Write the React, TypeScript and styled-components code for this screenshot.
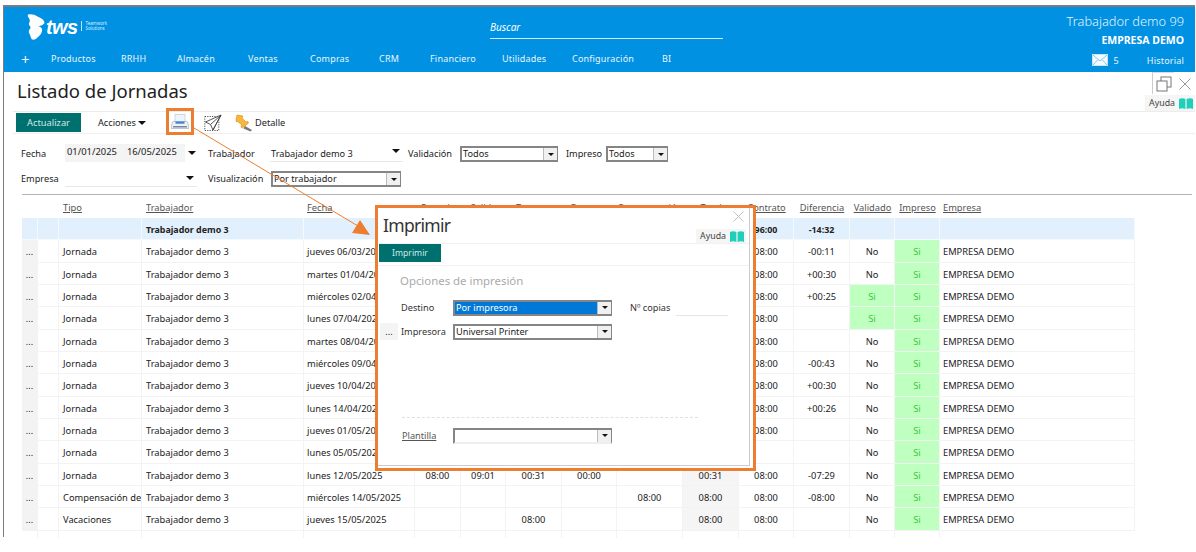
import React from "react";
import styled, { createGlobalStyle } from "styled-components";

const Global = createGlobalStyle`
  html, body { margin: 0; padding: 0; background: #fff; overflow: hidden; }
  body { font-family: "Noto Sans", "Open Sans", sans-serif; color: #222; }
`;

const Page = styled.div`
  position: relative;
  width: 1196px;
  height: 552px;
  padding-top: 5px;
  box-sizing: border-box;
  overflow: hidden;
  font-size: 9.6px;
`;
const Frame = styled.div`
  width: 1192px;
  height: 532px;
  margin-left: 3px;
  border-top: 2px solid #7c7c7c;
  border-left: 1px solid #7c7c7c;
  box-sizing: border-box;
  display: flex;
  flex-direction: column;
`;
const Header = styled.header`
  height: 65px;
  flex: none;
  background: #0091e3;
  color: #fff;
  display: flex;
  flex-direction: column;
`;
const HeaderTop = styled.div`
  height: 41px;
  display: flex;
  position: relative;
`;
const LogoBox = styled.div`
  width: 486px;
  padding: 6px 0 0 23px;
  box-sizing: border-box;
  display: flex;
  align-items: flex-start;
`;
const LogoText = styled.span`
  font: italic 700 20px/22px "Liberation Sans", sans-serif;
  letter-spacing: -0.6px;
  margin: 3px 0 0 0;
`;
const LogoTag = styled.span`
  margin: 8px 0 0 3px;
  padding-left: 4px;
  border-left: 1px solid #bfe3f8;
  font-size: 4.4px;
  line-height: 5px;
  color: #d8f0ff;
`;
const Search = styled.div`
  width: 233px;
  height: 25px;
  margin: 6px 0 0 0;
  border-bottom: 1px solid #cfeaf9;
  box-sizing: content-box;
  font: italic 10px/28px "Noto Sans", sans-serif;
`;
const UserBox = styled.div`
  flex: 1;
  text-align: right;
  padding: 5px 11px 0 0;
`;
const UserName = styled.div`
  font-size: 12.8px;
  line-height: 18px;
  font-weight: 300;
  color: #e2f3fd;
`;
const UserCompany = styled.div`
  font-size: 10.5px;
  line-height: 20px;
  font-weight: 700;
`;
const Nav = styled.nav`
  height: 24px;
  display: flex;
  align-items: center;
  padding: 0 0 4px 16px;
  box-sizing: border-box;
  font-size: 9px;
  letter-spacing: 0.2px;
  color: #eaf6fd;
`;
const Plus = styled.span`
  width: 31px;
  margin-top: 2px;
  padding-left: 1px;
  box-sizing: border-box;
  font-size: 15px;
  line-height: 20px;
`;
const NavItem = styled.span<{ $w: number }>`
  width: ${(p) => p.$w}px;
  flex: none;
`;
const NavRight = styled.div`
  margin-left: auto;
  margin-top: 4px;
  padding-right: 11px;
  display: flex;
  align-items: center;
`;
const MailCount = styled.span`
  margin: 0 28px 0 5px;
`;
const TitleRow = styled.div`
  height: 39px;
  flex: none;
  margin-left: 9px;
  border-bottom: 1px solid #ececec;
  display: flex;
  justify-content: space-between;
`;
const Title = styled.h1`
  margin: 0;
  padding: 6px 0 0 4px;
  font-size: 18.5px;
  line-height: 25px;
  font-weight: 400;
  color: #222;
`;
const WinTools = styled.div`
  width: 51px;
  display: flex;
  flex-direction: column;
  align-items: flex-end;
`;
const WinRow = styled.div`
  height: 23px;
  width: 43px;
  display: flex;
  flex: none;
`;
const WinButton = styled.div`
  width: 22px;
  height: 22px;
  border-left: 1px solid #ccc;
  border-top: 1px solid #ddd;
  box-sizing: border-box;
  display: flex;
  align-items: center;
  justify-content: center;
`;
const WinClose = styled.div`
  flex: 1;
  display: flex;
  align-items: center;
  justify-content: center;
`;
const HelpBox = styled.div`
  height: 16px;
  width: 50px;
  background: #f5f5f5;
  display: flex;
  align-items: center;
  justify-content: flex-end;
  gap: 4px;
  padding-right: 2px;
  box-sizing: border-box;
  font-size: 8.8px;
  color: #444;
`;
const Toolbar = styled.div`
  height: 22px;
  flex: none;
  margin-left: 9px;
  border-bottom: 1px solid #efefef;
  display: flex;
  align-items: center;
  padding-left: 3px;
  box-sizing: border-box;
`;
const TealButton = styled.div`
  width: 65px;
  height: 19px;
  background: #00706f;
  color: #cfe9e6;
  display: flex;
  align-items: center;
  justify-content: center;
  font-size: 9.3px;
`;
const ActionsMenu = styled.div`
  margin-left: 17px;
  width: 54px;
  display: flex;
  align-items: center;
  gap: 2px;
  font-size: 9.2px;
  color: #222;
`;
const Caret = styled.span`
  display: inline-block;
  width: 0;
  height: 0;
  border-left: 4px solid transparent;
  border-right: 4px solid transparent;
  border-top: 4px solid #111;
`;
const IconSlot = styled.span<{ $w: number }>`
  width: ${(p) => p.$w}px;
  display: flex;
  align-items: center;
  flex: none;
`;
const Detail = styled.span`
  font-size: 9.2px;
`;
const Filters = styled.div`
  height: 60px;
  flex: none;
  padding: 10px 0 0 17px;
  box-sizing: border-box;
  display: flex;
  flex-direction: column;
  gap: 7px;
`;
const Label = styled.span<{ $w: number; $ml?: number }>`
  width: ${(p) => p.$w}px;
  margin-left: ${(p) => p.$ml ?? 0}px;
  flex: none;
`;
const DateBox = styled.div`
  width: 120px;
  height: 18px;
  background: #f4f4f4;
  display: flex;
  gap: 10px;
  padding: 0 0 3px 2px;
  box-sizing: border-box;
  align-items: center;
  font-size: 9.4px;
  flex: none;
`;
const CaretSlot = styled.span`
  width: 23px;
  flex: none;
  padding-left: 3px;
  box-sizing: border-box;
  display: flex;
`;
const LineField = styled.div<{ $w: number; $mr?: number }>`
  width: ${(p) => p.$w}px;
  height: 18px;
  flex: none;
  border-bottom: 1px solid #e8e8e8;
  box-sizing: border-box;
  display: flex;
  align-items: center;
  justify-content: space-between;
  padding: 1px 3px 0 1px;
  margin-right: ${(p) => p.$mr ?? 5}px;
`;
const TopCaret = styled(Caret)`
  margin-bottom: 5px;
`;
const Select = styled.div<{ $w: number; $flat?: boolean }>`
  width: ${(p) => p.$w}px;
  height: 16px;
  flex: none;
  border: 2px solid #858585;
  border-width: 2px 1px 2px 2px;
  border-bottom-color: ${(p) => (p.$flat ? "#eee" : "#858585")};
  box-sizing: border-box;
  background: #fff;
  display: flex;
  align-items: stretch;
  font-size: 9.2px;
`;
const FilterRow = styled.div`
  height: 18px;
  display: flex;
  align-items: center;
  font-size: 9.2px;
  & > ${Select} {
    margin-top: 2px;
  }
`;
const SelectValue = styled.span<{ $sel?: boolean }>`
  flex: 1;
  line-height: 12px;
  padding-left: 1px;
  white-space: nowrap;
  background: ${(p) => (p.$sel ? "#0078d7" : "#fff")};
  color: ${(p) => (p.$sel ? "#fff" : "#222")};
`;
const SelectArrow = styled.span`
  width: 13px;
  flex: none;
  background: #f0f0f0;
  border-left: 1px solid #bbb;
  display: flex;
  align-items: center;
  justify-content: center;
`;
const TinyCaret = styled.span`
  width: 0;
  height: 0;
  border-left: 3px solid transparent;
  border-right: 3px solid transparent;
  border-top: 3px solid #111;
`;
const TableWrap = styled.div`
  margin-left: 18px;
  width: 1170px;
  border-top: 1px solid #b5b5b5;
  font-size: 9.3px;
`;
const cols = "16px 21px 83px 162px 111px 46px 45px 56px 55px 66px 56px 55px 56px 45px 45px 195px";
const HeadRow = styled.div`
  display: grid;
  grid-template-columns: ${cols};
  width: 1113px;
  height: 23px;
  padding-top: 2px;
  box-sizing: border-box;
  align-items: center;
  color: #555;
`;
const HeadCell = styled.span<{ $center?: boolean; $pad?: number }>`
  text-decoration: underline;
  padding-left: ${(p) => (p.$center ? 0 : p.$pad ?? 3)}px;
  text-align: ${(p) => (p.$center ? "center" : "left")};
  white-space: nowrap;
`;
const Row = styled.div<{ $sum?: boolean }>`
  display: grid;
  grid-template-columns: ${cols};
  width: 1113px;
  height: 22.33px;
  box-sizing: border-box;
  background: ${(p) => (p.$sum ? "#e2f0fd" : "#fff")};
  font-size: ${(p) => (p.$sum ? "8.9px" : "inherit")};
  font-weight: ${(p) => (p.$sum ? 700 : 400)};
  color: #222;
`;
const StubRow = styled(Row)`
  height: 7px;
`;
const Cell = styled.span<{ $center?: boolean; $pad?: number; $open?: boolean; $tone?: "dots" | "green" | "total" }>`
  border-right: 1px solid #f3f3f3;
  border-bottom: ${(p) => (p.$open ? "0" : "1px solid #f3f3f3")};
  box-sizing: border-box;
  overflow: hidden;
  white-space: nowrap;
  line-height: 23px;
  padding-left: ${(p) => (p.$center ? 0 : p.$pad ?? 3)}px;
  text-align: ${(p) => (p.$center ? "center" : "left")};
  background: ${(p) =>
    p.$tone === "green" ? "#bfffbf" : p.$tone === "total" ? "#f5f5f5" : p.$tone === "dots" ? "#f3f3f3" : "transparent"};
  color: ${(p) => (p.$tone === "green" ? "#3cc83c" : "inherit")};
`;
const SumCell = styled(Cell)`
  border-color: #f4f9fe;
`;
const Arrow = styled.svg`
  position: absolute;
  left: 0;
  top: 0;
  pointer-events: none;
`;
const PrintHighlight = styled.div`
  position: absolute;
  left: 166px;
  top: 108px;
  width: 28px;
  height: 27px;
  border: 3px solid #ed7d31;
  box-sizing: border-box;
  display: flex;
  align-items: center;
  justify-content: center;
`;
const Dialog = styled.div`
  position: absolute;
  left: 375px;
  top: 205px;
  width: 381px;
  height: 266px;
  background: #fff;
  border: 3px solid #ed7d31;
  box-sizing: border-box;
  padding-right: 3px;
  padding-bottom: 2px;
`;
const DialogInner = styled.div`
  height: 100%;
  border-right: 1px solid #ccc;
  border-bottom: 1px solid #ccc;
  box-sizing: border-box;
  display: flex;
  flex-direction: column;
`;
const DialogHead = styled.div`
  height: 35px;
  flex: none;
  display: flex;
  justify-content: space-between;
  border-bottom: 1px solid #f1f1f1;
`;
const DialogTitle = styled.h2`
  margin: 0;
  padding: 5px 0 0 5px;
  font-size: 17.5px;
  letter-spacing: -0.7px;
  line-height: 25px;
  font-weight: 400;
  color: #333;
`;
const DialogTools = styled.div`
  width: 50px;
  margin-right: 3px;
  display: flex;
  flex-direction: column;
  align-items: center;
`;
const DialogClose = styled.div`
  height: 21px;
  padding: 3px 0 0 34px;
  box-sizing: border-box;
  flex: none;
`;
const DialogHelp = styled(HelpBox)`
  height: 14px;
`;
const TabBar = styled.div`
  height: 21px;
  flex: none;
  padding-left: 1px;
  border-bottom: 1px solid #f1f1f1;
`;
const Tab = styled.div`
  width: 62px;
  height: 18px;
  background: #00706f;
  color: #cfe9e6;
  font-size: 8.6px;
  line-height: 18px;
  text-align: center;
`;
const DialogBody = styled.div`
  flex: 1;
  display: flex;
  flex-direction: column;
  font-size: 9.2px;
`;
const SectionTitle = styled.div`
  margin: 6px 0 0 22px;
  height: 18px;
  font-size: 11.4px;
  line-height: 18px;
  color: #aaa;
`;
const FormRow = styled.div<{ $mt: number }>`
  margin-top: ${(p) => p.$mt}px;
  display: flex;
  align-items: center;
  height: 17px;
`;
const DotsButton = styled.span`
  width: 18px;
  height: 17px;
  flex: none;
  margin: 0 3px 0 2px;
  background: #f4f4f4;
  text-align: center;
  line-height: 17px;
`;
const FormLabel = styled.span<{ $w: number; $ml?: number; $link?: boolean }>`
  width: ${(p) => p.$w}px;
  flex: none;
  margin-left: ${(p) => p.$ml ?? 0}px;
  text-decoration: ${(p) => (p.$link ? "underline" : "none")};
  color: ${(p) => (p.$link ? "#555" : "#333")};
`;
const CopiesLine = styled.span`
  width: 52px;
  height: 16px;
  flex: none;
  border-bottom: 1px solid #e6e6e6;
  margin-left: 2px;
`;
const Dashed = styled.div`
  margin: 77px 0 0 24px;
  width: 296px;
  border-top: 1px dashed #e0e0e0;
`;

const Butterfly = () => (
  <svg width="19" height="28" viewBox="0 0 20 28">
    <path
      fill="#fff"
      d="M1 1c3-1 7 0 10 2 3 1 6 3 7 5 1 2 0 3-2 4-1 1-3 1-4 1 2 1 4 2 4 4 0 3-2 6-5 8-2 2-4 3-6 2-1-1-1-3-2-5-1-2-2-4 0-6 1-1 1-2 0-3C1 11 3 9 3 7 3 5 0 3 1 1z"
    />
  </svg>
);
const Mail = () => (
  <svg width="16" height="12" viewBox="0 0 16 12">
    <rect x="0.5" y="0.5" width="15" height="11" fill="#f4fbff" stroke="#c8e6f7" />
    <path d="M1 1l7 6 7-6M1 11l5-5.5M15 11l-5-5.5" fill="none" stroke="#7fbfe6" strokeWidth="0.9" />
  </svg>
);
const CopyIcon = () => (
  <svg width="16" height="16" viewBox="0 0 16 16" fill="#fff" stroke="#777">
    <rect x="5" y="1" width="10" height="10" />
    <rect x="1" y="5" width="10" height="10" />
  </svg>
);
const CloseX = ({ size, color }: { size: number; color: string }) => (
  <svg width={size} height={size} viewBox="0 0 12 12" stroke={color} fill="none">
    <path d="M0.5 0.5l11 11M11.5 0.5l-11 11" />
  </svg>
);
const Book = () => (
  <svg width="14" height="11" viewBox="0 0 14 11">
    <path fill="#1fcfb9" d="M0 1c2-1 4-1 6.4 0v10C4 10 2 10 0 11zM7.6 1C10 0 12 0 14 1v10c-2-1-4-1-6.4 0z" />
  </svg>
);
const PrinterIcon = () => (
  <svg width="18" height="16" viewBox="0 0 18 16">
    <rect x="4" y="0.5" width="10" height="7.5" fill="#eef5fd" stroke="#bcc9da" strokeWidth="0.7" />
    <path d="M2 7.5h14l1.5 3.5v3.5H.5V11z" fill="#edf0f5" stroke="#a5b0c0" strokeWidth="0.7" />
    <rect x="4.5" y="7.5" width="9" height="2.2" fill="#3f82d2" />
    <rect x="2" y="12" width="14" height="1.5" fill="#7a8698" />
  </svg>
);
const SendIcon = () => (
  <svg width="18" height="18" viewBox="0 0 18 18" fill="none">
    <rect x="0.8" y="2.5" width="14" height="14" stroke="#555" strokeDasharray="1.2 1.2" />
    <path d="M17 1L1.5 8l5 2.5L9 16zM17 1L6.5 10.5M17 1L9 16" stroke="#444" strokeWidth="0.9" fill="#fff" />
  </svg>
);
const PinIcon = () => (
  <svg width="18" height="18" viewBox="0 0 18 18">
    <path d="M2 1l6 1-1 2 4 4 2-.5.5 1.5-6 5-1.5-1 .5-2.5-4-3-1 .5L1 6z" fill="#f6b73c" stroke="#d9861a" strokeWidth="0.6" />
    <path d="M10 12l7 4-1.5 1.5-7-3z" fill="#77797c" />
  </svg>
);

const navItems: [string, number][] = [
  ["Productos", 70], ["RRHH", 56], ["Almacén", 71], ["Ventas", 62], ["Compras", 69],
  ["CRM", 51], ["Financiero", 72], ["Utilidades", 70], ["Configuración", 90], ["BI", 20],
];
const headers = ["", "", "Tipo", "Trabajador", "Fecha", "Entrada", "Salida", "T. pausa", "D. pausa", "Compensación", "Total", "Contrato", "Diferencia", "Validado", "Impreso", "Empresa"];

type R = { t: string; f: string; h?: string[]; c?: string; d?: string; v: string };
const rows: R[] = [
  { t: "Jornada", f: "jueves 06/03/2025", c: "08:00", d: "-00:11", v: "No" },
  { t: "Jornada", f: "martes 01/04/2025", c: "08:00", d: "+00:30", v: "No" },
  { t: "Jornada", f: "miércoles 02/04/2025", c: "08:00", d: "+00:25", v: "Si" },
  { t: "Jornada", f: "lunes 07/04/2025", c: "08:00", v: "Si" },
  { t: "Jornada", f: "martes 08/04/2025", c: "08:00", v: "No" },
  { t: "Jornada", f: "miércoles 09/04/2025", c: "08:00", d: "-00:43", v: "No" },
  { t: "Jornada", f: "jueves 10/04/2025", c: "08:00", d: "+00:30", v: "No" },
  { t: "Jornada", f: "lunes 14/04/2025", c: "08:00", d: "+00:26", v: "No" },
  { t: "Jornada", f: "jueves 01/05/2025", c: "08:00", v: "No" },
  { t: "Jornada", f: "lunes 05/05/2025", v: "No" },
  { t: "Jornada", f: "lunes 12/05/2025", h: ["08:00", "09:01", "00:31", "00:00", "", "00:31"], c: "08:00", d: "-07:29", v: "No" },
  { t: "Compensación de", f: "miércoles 14/05/2025", h: ["", "", "", "", "08:00", "08:00"], c: "08:00", d: "-08:00", v: "No" },
  { t: "Vacaciones", f: "jueves 15/05/2025", h: ["", "", "08:00", "", "", "08:00"], c: "08:00", v: "No" },
];

export default function App() {
  return (
    <Page>
      <Global />
      <Frame>
        <Header>
          <HeaderTop>
            <LogoBox>
              <Butterfly />
              <LogoText>tws</LogoText>
              <LogoTag>Teamwork<br />Solutions</LogoTag>
            </LogoBox>
            <Search>Buscar</Search>
            <UserBox>
              <UserName>Trabajador demo 99</UserName>
              <UserCompany>EMPRESA DEMO</UserCompany>
            </UserBox>
          </HeaderTop>
          <Nav>
            <Plus>+</Plus>
            {navItems.map(([n, w]) => <NavItem key={n} $w={w}>{n}</NavItem>)}
            <NavRight>
              <Mail />
              <MailCount>5</MailCount>
              Historial
            </NavRight>
          </Nav>
        </Header>
        <TitleRow>
          <Title>Listado de Jornadas</Title>
          <WinTools>
            <WinRow>
              <WinButton><CopyIcon /></WinButton>
              <WinClose><CloseX size={12} color="#999" /></WinClose>
            </WinRow>
            <HelpBox>Ayuda <Book /></HelpBox>
          </WinTools>
        </TitleRow>
        <Toolbar>
          <TealButton>Actualizar</TealButton>
          <ActionsMenu>Acciones <Caret /></ActionsMenu>
          <IconSlot $w={52} />
          <IconSlot $w={31}><SendIcon /></IconSlot>
          <IconSlot $w={20}><PinIcon /></IconSlot>
          <Detail>Detalle</Detail>
        </Toolbar>
        <Filters>
          <FilterRow>
            <Label $w={44}>Fecha</Label>
            <DateBox><span>01/01/2025</span><span>16/05/2025</span></DateBox>
            <CaretSlot><Caret /></CaretSlot>
            <Label $w={62}>Trabajador</Label>
            <LineField $w={133}>Trabajador demo 3<TopCaret /></LineField>
            <Label $w={52}>Validación</Label>
            <Select $w={98}><SelectValue>Todos</SelectValue><SelectArrow><TinyCaret /></SelectArrow></Select>
            <Label $w={40} $ml={8}>Impreso</Label>
            <Select $w={62}><SelectValue>Todos</SelectValue><SelectArrow><TinyCaret /></SelectArrow></Select>
          </FilterRow>
          <FilterRow>
            <Label $w={44}>Empresa</Label>
            <LineField $w={132} $mr={11}><span /><Caret /></LineField>
            <Label $w={63}>Visualización</Label>
            <Select $w={130}><SelectValue>Por trabajador</SelectValue><SelectArrow><TinyCaret /></SelectArrow></Select>
          </FilterRow>
        </Filters>
        <TableWrap>
          <HeadRow>
            {headers.map((h, i) => (
              <HeadCell key={i} $center={i >= 5 && i <= 14} $pad={i === 2 || i === 3 ? 4 : 3}>{h}</HeadCell>
            ))}
          </HeadRow>
          <Row $sum>
            <SumCell /><SumCell /><SumCell />
            <SumCell $pad={4}>Trabajador demo 3</SumCell>
            <SumCell /><SumCell /><SumCell /><SumCell /><SumCell /><SumCell /><SumCell />
            <SumCell $center>96:00</SumCell>
            <SumCell $center>-14:32</SumCell>
            <SumCell /><SumCell /><SumCell />
          </Row>
          {rows.map((r) => {
            const h = r.h ?? ["", "", "", "", "", ""];
            return (
              <Row key={r.f}>
                <Cell $center $tone="dots">...</Cell>
                <Cell />
                <Cell $pad={4}>{r.t}</Cell>
                <Cell $pad={4}>Trabajador demo 3</Cell>
                <Cell>{r.f}</Cell>
                {h.slice(0, 5).map((v, i) => <Cell key={i} $center>{v}</Cell>)}
                <Cell $center $tone="total">{h[5]}</Cell>
                <Cell $center>{r.c}</Cell>
                <Cell $center>{r.d}</Cell>
                <Cell $center $tone={r.v === "Si" ? "green" : undefined}>{r.v}</Cell>
                <Cell $center $tone="green">Si</Cell>
                <Cell>EMPRESA DEMO</Cell>
              </Row>
            );
          })}
          <StubRow>
            {headers.slice(0, 15).map((_, i) => <Cell key={i} $open />)}
          </StubRow>
        </TableWrap>
      </Frame>

      <Arrow width="1196" height="552" viewBox="0 0 1196 552">
        <path d="M194 128L358 226" stroke="#ed7d31" strokeWidth="1" fill="none" />
        <path d="M360 220L352 233L370 235z" fill="#ed7d31" />
      </Arrow>
      <PrintHighlight><PrinterIcon /></PrintHighlight>

      <Dialog>
        <DialogInner>
          <DialogHead>
            <DialogTitle>Imprimir</DialogTitle>
            <DialogTools>
              <DialogClose><CloseX size={11} color="#bbb" /></DialogClose>
              <DialogHelp>Ayuda <Book /></DialogHelp>
            </DialogTools>
          </DialogHead>
          <TabBar><Tab>Imprimir</Tab></TabBar>
          <DialogBody>
            <SectionTitle>Opciones de impresión</SectionTitle>
            <FormRow $mt={9}>
              <FormLabel $w={52} $ml={23}>Destino</FormLabel>
              <Select $w={159}><SelectValue $sel>Por impresora</SelectValue><SelectArrow><TinyCaret /></SelectArrow></Select>
              <FormLabel $w={44} $ml={18}>Nº copias</FormLabel>
              <CopiesLine />
            </FormRow>
            <FormRow $mt={7}>
              <DotsButton>...</DotsButton>
              <FormLabel $w={52}>Impresora</FormLabel>
              <Select $w={159}><SelectValue>Universal Printer</SelectValue><SelectArrow><TinyCaret /></SelectArrow></Select>
            </FormRow>
            <Dashed />
            <FormRow $mt={9}>
              <FormLabel $w={51} $ml={24} $link>Plantilla</FormLabel>
              <Select $w={159} $flat><SelectValue /><SelectArrow><TinyCaret /></SelectArrow></Select>
            </FormRow>
          </DialogBody>
        </DialogInner>
      </Dialog>
    </Page>
  );
}
